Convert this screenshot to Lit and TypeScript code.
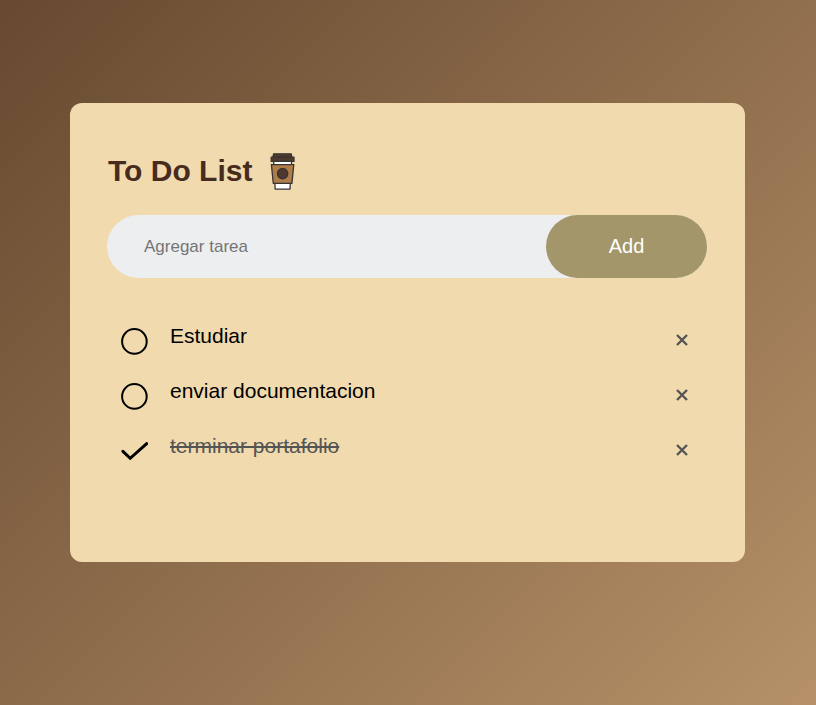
import { LitElement, html, css, svg } from "lit";
import { customElement, state } from "lit/decorators.js";
import { classMap } from "lit/directives/class-map.js";

interface Task {
  id: number;
  text: string;
  done: boolean;
}

const cup = html`
  <svg class="cup" viewBox="0 0 30 40" aria-hidden="true">
    <g stroke="#373435" stroke-width="1.3" stroke-linejoin="round">
      <path d="M5.6 10h18l-1.6 28.2H7.2z" fill="#ffffff" />
      <path d="M3.4 13.6h22.4l-1.9 18.8H5.3z" fill="#b07d48" />
      <path d="M5.6 2.8h17.6l.8 3.8H4.8z" fill="#4f382d" />
      <path d="M3.2 6.2h22.8v4.2H3.2z" fill="#4f382d" />
      <circle cx="14.6" cy="22.6" r="5.2" fill="#4f382d" />
    </g>
  </svg>
`;

const circle = svg`<circle cx="14.4" cy="14.4" r="12.3" />`;
const check = svg`<path class="tick" d="M2.9 14.3l7.3 7L26.7 6.6" />`;

@customElement("app-root")
export class AppRoot extends LitElement {
  static styles = css`
    :host {
      display: block;
      box-sizing: border-box;
      min-height: 100vh;
      padding: 103px 71px 40px 70px;
      background: linear-gradient(135deg, #664930, #b69168);
      font-family: "Liberation Sans", Arial, sans-serif;
    }
    * {
      box-sizing: border-box;
    }
    .card {
      max-width: 675px;
      margin: 0 auto;
      padding: 48px 38px 88px 37px;
      border-radius: 12px;
      background: #f1daae;
    }
    .title {
      display: flex;
      align-items: center;
      gap: 16px;
      margin: 0 0 24px;
      padding-left: 1px;
      font-size: 30px;
      line-height: 40px;
      color: #462b1e;
    }
    .cup {
      width: 30px;
      height: 40px;
    }
    .entry {
      display: flex;
      margin-bottom: 31px;
      border-radius: 32px;
      background: #edeef0;
    }
    .field {
      flex: 1;
      min-width: 0;
      padding: 0 16px 0 37px;
      border: 0;
      outline: 0;
      background: transparent;
      font: inherit;
      font-size: 17px;
    }
    .field::placeholder {
      color: #757575;
      opacity: 1;
    }
    .add {
      width: 161px;
      height: 63px;
      border: 0;
      border-radius: 32px;
      background: #a3966a;
      color: #fff;
      font: inherit;
      font-size: 20px;
      cursor: pointer;
    }
    .tasks {
      margin: 0;
      padding: 0;
      list-style: none;
    }
    .task {
      display: flex;
      align-items: center;
      height: 55px;
      padding: 0 10px 0 13px;
    }
    .toggle {
      display: flex;
      flex: 1;
      align-items: center;
      gap: 22px;
      cursor: pointer;
    }
    .box {
      display: grid;
      width: 28px;
      height: 28px;
      margin-top: 8px;
    }
    .box > * {
      grid-area: 1 / 1;
      width: 28px;
      height: 28px;
      margin: 0;
    }
    .box input {
      opacity: 0;
    }
    .mark {
      fill: none;
      stroke: #000;
      stroke-width: 2;
      pointer-events: none;
    }
    .tick {
      stroke-width: 3;
      stroke-linecap: round;
    }
    .text {
      padding-bottom: 2px;
      font-size: 21px;
      line-height: 28px;
      color: #000;
    }
    .done {
      color: #555;
      text-decoration: line-through;
    }
    .remove {
      display: grid;
      place-items: center;
      width: 30px;
      height: 30px;
      margin-top: 6px;
      padding: 0;
      border: 0;
      background: none;
      cursor: pointer;
    }
    .cross {
      width: 12px;
      height: 12px;
      fill: none;
      stroke: #555;
      stroke-width: 2.4;
    }
  `;

  @state() private tasks: Task[] = [
    { id: 1, text: "Estudiar", done: false },
    { id: 2, text: "enviar documentacion", done: false },
    { id: 3, text: "terminar portafolio", done: true },
  ];

  private add(e: Event) {
    e.preventDefault();
    const field = this.renderRoot.querySelector<HTMLInputElement>(".field")!;
    const text = field.value.trim();
    if (!text) return;
    this.tasks = [...this.tasks, { id: Date.now(), text, done: false }];
    field.value = "";
  }

  private toggle(id: number) {
    this.tasks = this.tasks.map((t) => (t.id === id ? { ...t, done: !t.done } : t));
  }

  private remove(id: number) {
    this.tasks = this.tasks.filter((t) => t.id !== id);
  }

  private renderTask(task: Task) {
    return html`
      <li class="task">
        <label class="toggle">
          <span class="box">
            <input type="checkbox" .checked=${task.done} @change=${() => this.toggle(task.id)} />
            <svg class="mark" viewBox="0 0 28 28" aria-hidden="true">${task.done ? check : circle}</svg>
          </span>
          <span class=${classMap({ text: true, done: task.done })}>${task.text}</span>
        </label>
        <button class="remove" aria-label="Eliminar" @click=${() => this.remove(task.id)}>
          <svg class="cross" viewBox="0 0 12 12" aria-hidden="true"><path d="M1 1l10 10M11 1L1 11" /></svg>
        </button>
      </li>
    `;
  }

  render() {
    return html`
      <main class="card">
        <h1 class="title">To Do List ${cup}</h1>
        <form class="entry" @submit=${this.add}>
          <input class="field" type="text" placeholder="Agregar tarea" aria-label="Agregar tarea" />
          <button class="add" type="submit">Add</button>
        </form>
        <ul class="tasks">
          ${this.tasks.map((t) => this.renderTask(t))}
        </ul>
      </main>
    `;
  }
}
